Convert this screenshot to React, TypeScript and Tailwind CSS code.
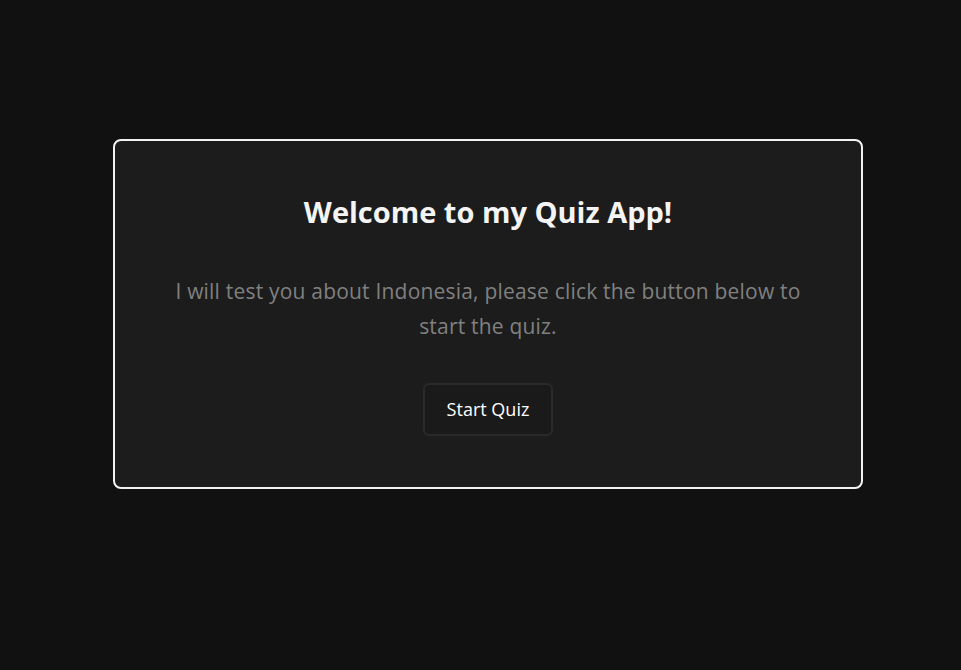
import React from 'react';

export default function App() {
  return (
    <div
      className="min-h-screen w-full bg-[#111111] pt-[139px] pl-[113px]"
      style={{ fontFamily: '"Open Sans", "Noto Sans", sans-serif' }}
    >
      <div className="w-[750px] h-[350px] rounded-lg border-2 border-[#f2f2f2] bg-[#1c1c1c] flex flex-col items-center pt-[49px] px-[40px]">
        <h1 className="text-[29px] leading-[44px] font-bold text-[#f4f4f4]">
          Welcome to my Quiz App!
        </h1>
        <p className="mt-[40px] max-w-[645px] text-center text-[21px] leading-[35px] tracking-[0.2px] text-[#808080]">
          I will test you about Indonesia, please click the button below to start the quiz.
        </p>
        <button className="mt-[39px] h-[53px] px-[22px] rounded-md border-2 border-[#2a2a2a] bg-[#1a1a1a] text-[18px] text-white">
          Start Quiz
        </button>
      </div>
    </div>
  );
}
